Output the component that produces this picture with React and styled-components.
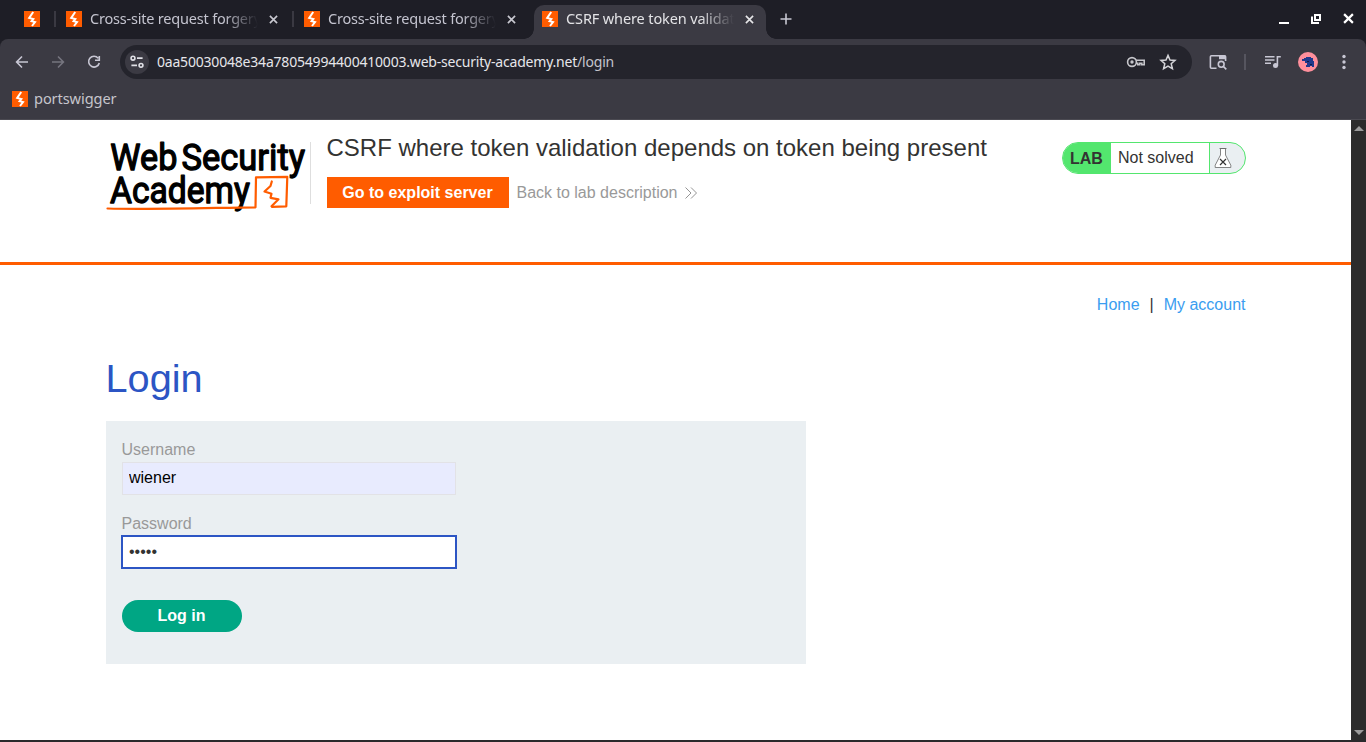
import React from "react";
import styled, { createGlobalStyle } from "styled-components";

const Global = createGlobalStyle`
  * { box-sizing: border-box; }
  body { margin: 0; overflow: hidden; background: #fff; font-family: "Liberation Sans", Arial, sans-serif; }
  svg { display: block; flex: none; }
`;

const chromeFont = `"Noto Sans", "Open Sans", sans-serif`;

const Window = styled.div`
  width: 1366px;
  height: 742px;
  display: flex;
  flex-direction: column;
  background: #1e1e26;
`;

/* ---------- tab strip ---------- */
const TabStrip = styled.div`
  height: 39px;
  display: flex;
  padding: 5px 0 0 8px;
  font: 14.5px ${chromeFont};
  color: #c4c4cf;
`;
const PinnedTab = styled.div`
  width: 46px;
  height: 28px;
  display: flex;
  align-items: center;
  padding-left: 16px;
`;
const TabDivider = styled.div`
  width: 2px;
  height: 16px;
  margin-top: 6px;
  background: #3a3942;
`;
const Tab = styled.div`
  position: relative;
  width: ${(p) => p.$width}px;
  height: ${(p) => (p.$active ? 34 : 28)}px;
  padding: 0 0 ${(p) => (p.$active ? 6 : 0)}px ${(p) => (p.$active ? 8 : 10)}px;
  margin-left: ${(p) => (p.$active ? 2 : 0)}px;
  display: flex;
  align-items: center;
  color: ${(p) => (p.$active ? "#e3e3e6" : "#c4c4cf")};
  background: ${(p) => (p.$active ? "#3b3a43" : "transparent")};
  border-radius: 10px 10px 0 0;
  &::before, &::after {
    content: "";
    display: ${(p) => (p.$active ? "block" : "none")};
    position: absolute;
    bottom: 0;
    width: 10px;
    height: 10px;
  }
  &::before { left: -10px; background: radial-gradient(circle at 0 0, transparent 9.5px, #3b3a43 10px); }
  &::after { right: -10px; background: radial-gradient(circle at 100% 0, transparent 9.5px, #3b3a43 10px); }
`;
const TabTitle = styled.span`
  width: 168px;
  margin: -2px 11px 0 8px;
  overflow: hidden;
  white-space: nowrap;
  line-height: 20px;
  letter-spacing: ${(p) => (p.$active ? -0.12 : -0.2)}px;
  mask-image: linear-gradient(90deg, #000 134px, transparent 168px);
`;
const NewTab = styled.div`
  padding: 8px 0 0 14px;
`;
const WindowButtons = styled.div`
  margin-left: auto;
  margin-right: 12px;
  display: flex;
  gap: 20px;
  padding-top: 8px;
`;

/* ---------- toolbar ---------- */
const Toolbar = styled.div`
  height: 46px;
  display: flex;
  align-items: center;
  background: #3b3a43;
  border-radius: 8px 8px 0 0;
  padding: 0 12px 0 12px;
`;
const NavButtons = styled.div`
  display: flex;
  gap: 16px;
  width: 108px;
  flex: none;
`;
const AddressBar = styled.div`
  width: 1072px;
  flex: none;
  height: 34px;
  border-radius: 17px;
  background: #24242c;
  display: flex;
  align-items: center;
  padding: 0 14px 0 5px;
  gap: 12px;
`;
const SiteInfo = styled.div`
  width: 24px;
  height: 24px;
  border-radius: 50%;
  background: #3b3a43;
  display: grid;
  place-items: center;
`;
const Url = styled.span`
  margin-right: auto;
  margin-left: -4px;
  font: 14px/20px ${chromeFont};
  letter-spacing: -0.2px;
  color: #e6e6ea;
  white-space: nowrap;
`;
const UrlPath = styled.span`
  color: #c4c4cc;
`;
const ToolbarEnd = styled.div`
  display: flex;
  align-items: center;
  margin-left: 16px;
`;
const ToolbarDivider = styled.div`
  width: 2px;
  height: 16px;
  margin: 0 17px 0 16px;
  background: #56555f;
`;
const Avatar = styled.div`
  width: 20px;
  height: 20px;
  margin: 0 16px 0 15px;
  border-radius: 50%;
  background: #ff8f9c;
  display: grid;
  place-items: center;
`;
const Bookmarks = styled.div`
  height: 35px;
  display: flex;
  align-items: flex-start;
  gap: 6px;
  padding: 6px 12px 0;
  background: #3b3a43;
  border-bottom: 1px solid #4b4a52;
  color: #c6c5cc;
`;
const BookmarkLabel = styled.span`
  margin-top: -3px;
  font: 14.6px/20px ${chromeFont};
  letter-spacing: -0.1px;
`;

/* ---------- page ---------- */
const Viewport = styled.div`
  height: 620px;
  display: flex;
`;
const Page = styled.main`
  width: 1351px;
  background: #fff;
`;
const Scrollbar = styled.div`
  width: 15px;
  background: #2c2c2c;
  display: flex;
  flex-direction: column;
  justify-content: space-between;
  align-items: center;
  padding: 6px 0 5px;
`;
const Container = styled.div`
  width: 1140px;
  margin: 0 auto;
`;
const LabHeader = styled.header`
  height: 145px;
  border-bottom: 3px solid #ff5c00;
`;
const HeaderRow = styled(Container)`
  display: flex;
  padding-top: 13px;
`;
const LogoBox = styled.div`
  width: 205px;
  height: 62px;
  margin: 9px 16px 0 0;
  border-right: 1px solid #dedede;
`;
const LabTitle = styled.h2`
  margin: 0;
  font-size: 24px;
  font-weight: 400;
  line-height: 30px;
  color: #333332;
`;
const LabActions = styled.div`
  display: flex;
  align-items: center;
  margin-top: 14px;
`;
const ExploitButton = styled.a`
  width: 182px;
  height: 31px;
  background: #ff5c00;
  color: #fff;
  font-weight: 700;
  font-size: 16px;
  line-height: 31px;
  text-align: center;
`;
const BackLink = styled.a`
  display: flex;
  align-items: center;
  gap: 8px;
  margin-left: 8px;
  font-size: 16px;
  color: #999;
`;
const Status = styled.div`
  width: 184px;
  height: 32px;
  margin: 9px 0 0 auto;
  display: flex;
  border: 1px solid #53e66e;
  border-radius: 16px;
  overflow: hidden;
  background: #eaeff2;
  color: #333332;
  font-size: 16px;
  line-height: 30px;
`;
const StatusTag = styled.span`
  width: 48px;
  padding-left: 7.5px;
  line-height: 31px;
  font-weight: 700;
  background: #53e66e;
`;
const StatusText = styled.span`
  width: 99px;
  padding-left: 7.5px;
  background: #fff;
  border-right: 1px solid #53e66e;
`;
const StatusIcon = styled.span`
  padding: 4px 0 0 4px;
`;
const TopLinks = styled.nav`
  display: flex;
  justify-content: flex-end;
  gap: 10px;
  padding-top: 30px;
  font-size: 16px;
  line-height: 20px;
  color: #333332;
`;
const TopLink = styled.a`
  color: #3a9df0;
`;
const Heading = styled.h1`
  margin: 38px 0 18px;
  font-size: 39.7px;
  font-weight: 400;
  line-height: 50px;
  color: #2c55c4;
`;
const LoginForm = styled.form`
  width: 700px;
  height: 243px;
  padding: 19px 16px;
  background: #eaeff2;
  display: flex;
  flex-direction: column;
  align-items: flex-start;
`;
const Label = styled.label`
  font-size: 16px;
  line-height: 20px;
  color: #999;
`;
const Field = styled.input`
  width: 334px;
  height: ${(p) => (p.$focused ? 32 : 33)}px;
  margin: 2px 0 ${(p) => (p.$focused ? 20 : 19)}px;
  padding: 0 6.5px ${(p) => (p.$focused ? 1 : 2)}px;
  font: 16px "Liberation Sans", Arial, sans-serif;
  color: ${(p) => (p.$focused ? "#333332" : "#000")};
  background: ${(p) => (p.$focused ? "#fff" : "#e8ebfe")};
  border: 1px solid ${(p) => (p.$focused ? "#2c55c4" : "#e2e2e6")};
  outline: ${(p) => (p.$focused ? "1px solid #2c55c4" : "none")};
  border-radius: 0;
`;
const SubmitButton = styled.button`
  width: 120px;
  height: 32px;
  margin-top: 12px;
  padding: 0;
  border: 0;
  border-radius: 16px;
  background: #00a684;
  color: #fff;
  font: 700 16px "Liberation Sans", Arial, sans-serif;
`;
const BottomEdge = styled.div`
  height: 2px;
  background: #2a2a2c;
`;

/* ---------- drawings ---------- */
const Favicon = () => (
  <svg width="16" height="16" viewBox="0 0 16 16">
    <rect width="16" height="16" fill="#ff5c00" />
    <path d="M9.2 1 5.2 6.9 9.3 8.1 7.6 10.2 11 11 8 15" fill="none" stroke="#fff" strokeWidth="2" />
  </svg>
);
const Cross = ({ color = "#d0d0d6", size = 10, w = 1.8 }) => (
  <svg width={size} height={size} viewBox="0 0 10 10" stroke={color} strokeWidth={w}>
    <path d="M1 1l8 8M9 1l-8 8" />
  </svg>
);
const Icon = ({ children, size = 20, color = "#c8c7d4", ...rest }) => (
  <svg width={size} height={size} viewBox="0 0 20 20" fill="none" stroke={color} strokeWidth="1.6" {...rest}>
    {children}
  </svg>
);

const BrandLogo = () => (
  <svg width="200" height="72" viewBox="0 0 200 72" style={{ overflow: "visible" }}>
    <g fill="#000" stroke="#000" strokeWidth="1.3" strokeLinejoin="round" fontFamily="Roboto, sans-serif" fontWeight="400" fontSize="36.5">
      <text x="4.3" y="28.2" textLength="67" lengthAdjust="spacingAndGlyphs">Web</text>
      <text x="75.5" y="28.2" textLength="123.5" lengthAdjust="spacingAndGlyphs">Security</text>
      <text x="4" y="60.9" textLength="140" lengthAdjust="spacingAndGlyphs">Academy</text>
    </g>
    <g fill="none" stroke="#ff5c00" strokeLinejoin="round" strokeLinecap="round">
      <path d="M1.5 66.5C40 67.8 100 66 149.5 65.3L150 35.3 181.3 34.8 180.3 64.3 166 64.8" strokeWidth="2.2" />
      <path d="M165.8 39.5 164.5 44 158.5 49.5 165.5 51.8 164.5 55.8 172.5 57.3 165.5 64.3" strokeWidth="2.2" />
    </g>
  </svg>
);

function BrowserTab({ title, active, width }) {
  return (
    <Tab $active={active} $width={width}>
      <Favicon />
      <TabTitle $active={active}>{title}</TabTitle>
      <Cross size={9} color={active ? "#e6e6e8" : "#c8c8d0"} />
    </Tab>
  );
}

export default function App() {
  return (
    <Window>
      <Global />
      <TabStrip>
        <PinnedTab><Favicon /></PinnedTab>
        <TabDivider />
        <BrowserTab title="Cross-site request forgery" width={236} />
        <TabDivider />
        <BrowserTab title="Cross-site request forgery" width={238} />
        <BrowserTab title="CSRF where token validation" active width={232} />
        <NewTab>
          <svg width="12" height="12" viewBox="0 0 12 12" stroke="#c8c8d2" strokeWidth="1.6"><path d="M6 .5v11M.5 6h11" /></svg>
        </NewTab>
        <WindowButtons>
          <svg width="12" height="12" viewBox="0 0 12 12"><path d="M0 9h10v2H0z" fill="#fff" /></svg>
          <svg width="12" height="12" viewBox="0 0 12 12" fill="none" stroke="#fff" strokeWidth="2"><path d="M4 2h5v5H4zM1 3.5V10h7" /></svg>
          <Cross size={11} color="#fff" w={2} />
        </WindowButtons>
      </TabStrip>
      <Toolbar>
        <NavButtons>
          <Icon><path d="M16 10H5M10 4.5 4.6 10l5.4 5.5" /></Icon>
          <Icon color="#76757f"><path d="M4 10h11M10 4.5l5.4 5.5-5.4 5.5" /></Icon>
          <Icon><path d="M14.2 6.2A5.4 5.4 0 1 0 15.3 11M15.3 4v4.2H11" /></Icon>
        </NavButtons>
        <AddressBar>
          <SiteInfo>
            <Icon size={16} color="#e0e0e6"><circle cx="5" cy="5.2" r="2.4" strokeWidth="2" /><path d="M10 5.2h7M3 14.2h7" strokeWidth="2" /><circle cx="15" cy="14.2" r="2.4" strokeWidth="2" /></Icon>
          </SiteInfo>
          <Url>0aa50030048e34a78054994400410003.web-security-academy.net<UrlPath>/login</UrlPath></Url>
          <Icon color="#c6c6cb">
            <circle cx="6" cy="10" r="4.4" /><circle cx="6" cy="10" r="1.7" fill="#c6c6cb" stroke="none" />
            <path d="M10 8.2h8.2v4.6h-2.4v-1.6h-2v1.6h-2v-1.6H10" />
          </Icon>
          <Icon color="#d4d4d8"><path d="m10 3.4 2 4.6 5 .4-3.8 3.3 1.2 4.9-4.4-2.6-4.4 2.6 1.2-4.9L3 8.4l5-.4z" strokeWidth="1.5" /></Icon>
        </AddressBar>
        <ToolbarEnd>
          <Icon><path d="M8.5 16.2H3.4a1 1 0 0 1-1-1V4.8a1 1 0 0 1 1-1h13.2a1 1 0 0 1 1 1V9" /><path d="M11 3.5h6.6v3.7H11z" fill="#c8c7d4" stroke="none" /><circle cx="13.2" cy="12.3" r="2.9" /><path d="m15.3 14.4 3 3" /></Icon>
          <ToolbarDivider />
          <Icon><path d="M2 4.7h9.5M2 8h9.5M2 11.3h6M14.4 14V4.8h3.4" /><circle cx="12.5" cy="13.6" r="2.5" fill="#c8c7d4" stroke="none" /></Icon>
          <Avatar>
            <svg width="12" height="12" viewBox="0 0 12 12"><path d="M0 3h2V2h2V1h5v1h2v3h1v6h-2v-1H8v1H4V9h1V7H3V5H0z" fill="#21398c" /><path d="M5 5h2v1H5zM8 8h2v1H8z" fill="#101a45" /></svg>
          </Avatar>
          <Icon color="#c8c7d4"><g fill="#c8c7d4" stroke="none"><circle cx="10" cy="4.5" r="1.7" /><circle cx="10" cy="10" r="1.7" /><circle cx="10" cy="15.5" r="1.7" /></g></Icon>
        </ToolbarEnd>
      </Toolbar>
      <Bookmarks><Favicon /><BookmarkLabel>portswigger</BookmarkLabel></Bookmarks>
      <Viewport>
        <Page>
          <LabHeader>
            <HeaderRow>
              <LogoBox><BrandLogo /></LogoBox>
              <div>
                <LabTitle>CSRF where token validation depends on token being present</LabTitle>
                <LabActions>
                  <ExploitButton>Go to exploit server</ExploitButton>
                  <BackLink>
                    Back to lab description
                    <svg width="12" height="12" viewBox="0 0 12 12" fill="none" stroke="#888" strokeWidth=".9"><path d="M.5 .5 6 6 .5 11.5M6 .5 11.5 6 6 11.5" /></svg>
                  </BackLink>
                </LabActions>
              </div>
              <Status>
                <StatusTag>LAB</StatusTag>
                <StatusText>Not solved</StatusText>
                <StatusIcon>
                  <svg width="18" height="22" viewBox="0 0 18 22" fill="#fff" stroke="#666" strokeWidth=".8">
                    <path d="M6.5 1.5V8L1.2 18.2V20.5H16.8V18.2L11.5 8V1.5Z" /><path d="M5.5 1.5h7" />
                    <path d="m6 12 6 6m0-6-6 6" stroke="#333" strokeWidth="1.2" />
                  </svg>
                </StatusIcon>
              </Status>
            </HeaderRow>
          </LabHeader>
          <Container>
            <TopLinks><TopLink>Home</TopLink><span>|</span><TopLink>My account</TopLink></TopLinks>
            <Heading>Login</Heading>
            <LoginForm>
              <Label>Username</Label>
              <Field defaultValue="wiener" />
              <Label>Password</Label>
              <Field type="password" defaultValue="peter" $focused />
              <SubmitButton type="button">Log in</SubmitButton>
            </LoginForm>
          </Container>
        </Page>
        <Scrollbar>
          <svg width="10" height="5" viewBox="0 0 10 5"><path d="M5 0l5 5H0z" fill="#9b9b9b" /></svg>
          <svg width="10" height="5" viewBox="0 0 10 5"><path d="M0 0h10L5 5z" fill="#9b9b9b" /></svg>
        </Scrollbar>
      </Viewport>
      <BottomEdge />
    </Window>
  );
}
